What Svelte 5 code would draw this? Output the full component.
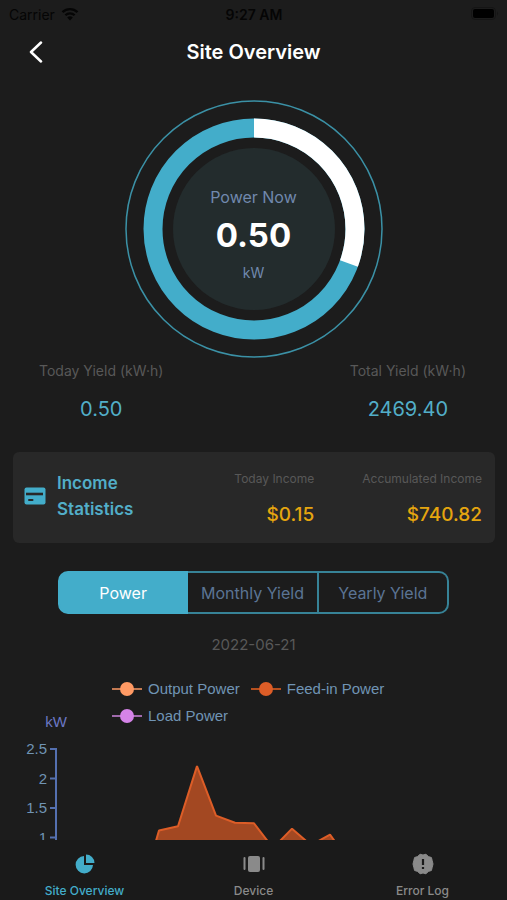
<script>
  let period = $state('Power');
  let tab = $state('Site Overview');

  const periods = ['Power', 'Monthly Yield', 'Yearly Yield'];
  const tabs = ['Site Overview', 'Device', 'Error Log'];

  const legend = [
    { name: 'Output Power', color: '#ff9a64', line: '#c47a52' },
    { name: 'Feed-in Power', color: '#dd5d27', line: '#b5501f' },
    { name: 'Load Power', color: '#d583e8', line: '#a06aac' },
  ];

  // one sample per slot on the category axis, in kW
  const feedIn = [0, 0, 0, 0, 0, 1.12, 1.19, 2.21, 1.37, 1.25, 1.24, 0.82, 1.15, 0.87, 1.05, 0.6, 0, 0, 0, 0, 0, 0];
  const ticks = [2.5, 2, 1.5, 1];

  const axisX = 56;
  const top = 37;
  const unit = 59;
  const step = 19;

  const yFor = (v) => top + (2.5 - v) * unit;
  const xFor = (i) => axisX + 8 + i * step;

  const line = feedIn.map((v, i) => `${xFor(i)},${yFor(v)}`).join(' ');
  const area = `${xFor(0)},${yFor(0)} ${line} ${xFor(feedIn.length - 1)},${yFor(0)}`;

  const ringLength = 2 * Math.PI * 101;
  const share = 0.305;
</script>

<div class="app">
  <div class="status">
    <span class="carrier">
      Carrier
      <svg width="18" height="14" viewBox="0 0 18 14" aria-hidden="true">
        <path d="M1.5 5.2a10.6 10.6 0 0 1 15 0" fill="none" stroke="currentColor" stroke-width="2.4" />
        <path d="M4.4 8.2a6.5 6.5 0 0 1 9.2 0" fill="none" stroke="currentColor" stroke-width="2.3" />
        <path d="M9 13.4 6.2 10.6a4 4 0 0 1 5.6 0z" fill="currentColor" />
      </svg>
    </span>
    <span class="time">9:27 AM</span>
    <svg class="battery" width="28" height="14" viewBox="0 0 28 14" aria-hidden="true">
      <rect x="0.5" y="0.5" width="24" height="12" rx="3.5" fill="none" stroke="#151515" />
      <rect x="2" y="2" width="21" height="9" rx="2" fill="#000" />
      <path d="M26 4.5c1.4.6 1.4 3.4 0 4z" fill="#151515" />
    </svg>
  </div>

  <header>
    <button class="back" aria-label="Back">
      <svg width="14" height="22" viewBox="0 0 14 22">
        <path d="M12 1.5 2 11l10 9.5" fill="none" stroke="#fff" stroke-width="2.5" stroke-linecap="round" stroke-linejoin="round" />
      </svg>
    </button>
    <h1>Site Overview</h1>
  </header>

  <main>
    <section class="gauge">
      <svg width="258" height="258" viewBox="-129 -129 258 258" aria-hidden="true">
        <circle r="128" fill="none" stroke="#3b91a6" stroke-width="1.5" />
        <circle r="101" fill="none" stroke="#43adca" stroke-width="19" />
        <circle r="101" fill="none" stroke="#fff" stroke-width="19" stroke-dasharray="{ringLength * share} {ringLength}" transform="rotate(-90)" />
        <circle r="81" fill="#232c2d" />
      </svg>
      <div class="reading">
        <span class="reading-label">Power Now</span>
        <strong>0.50</strong>
        <span class="reading-unit">kW</span>
      </div>
    </section>

    <section class="yields">
      <div class="yield">
        <span>Today Yield (kW·h)</span>
        <b>0.50</b>
      </div>
      <div class="yield">
        <span>Total Yield (kW·h)</span>
        <b>2469.40</b>
      </div>
    </section>

    <section class="income">
      <div class="income-title">
        <svg width="22" height="18" viewBox="0 0 22 18" aria-hidden="true">
          <rect x="0.5" y="0.5" width="21" height="17" rx="2" fill="#43adca" />
          <path d="M2 7h17" stroke="#282828" stroke-width="2.6" />
          <path d="M5 13h3.5" stroke="#282828" stroke-width="2" stroke-linecap="round" />
        </svg>
        <h2>Income Statistics</h2>
      </div>
      <div class="amount">
        <span>Today Income</span>
        <b>$0.15</b>
      </div>
      <div class="amount">
        <span>Accumulated Income</span>
        <b>$740.82</b>
      </div>
    </section>

    <div class="periods">
      {#each periods as p}
        <button class:active={period === p} aria-pressed={period === p} onclick={() => (period = p)}>{p}</button>
      {/each}
    </div>

    <time class="date" datetime="2022-06-21">2022-06-21</time>

    <section class="chart">
      <ul class="legend">
        {#each legend as item}
          <li>
            <svg width="30" height="16" viewBox="0 0 30 16" aria-hidden="true">
              <path d="M0 8h30" stroke={item.line} stroke-width="2" />
              <circle cx="15" cy="8" r="7" fill={item.color} />
            </svg>
            {item.name}
          </li>
        {/each}
      </ul>
      <svg class="plot" viewBox="0 0 507 210" role="img" aria-label="Power in kW">
        <text class="axis-name" x={axisX} y="15" text-anchor="middle">kW</text>
        <polygon points={area} fill="#a34822" />
        <polyline points={line} fill="none" stroke="#dd5d27" stroke-width="2" stroke-linejoin="bevel" />
        <path d="M{axisX} {top - 1}V{yFor(0)}" stroke="#5470b0" stroke-width="2" />
        {#each ticks as t}
          <path d="M{axisX - 6} {yFor(t)}h6" stroke="#5470b0" stroke-width="2" />
          <text class="tick" x={axisX - 9} y={yFor(t) + 5} text-anchor="end">{t}</text>
        {/each}
      </svg>
    </section>
  </main>

  <nav>
    {#each tabs as t, i}
      <button class:active={tab === t} onclick={() => (tab = t)}>
        <svg width="24" height="24" viewBox="0 0 24 24" fill="currentColor" aria-hidden="true">
          {#if i === 0}
            <path d="M11 4v9h9a8.7 8.7 0 1 1-9-9z" />
            <path d="M13 2.500a8.500 8.500 0 0 1 8.500 8.500H13z" />
          {:else if i === 1}
            <rect x="6" y="4" width="12" height="16" rx="2" />
            <rect x="1.5" y="5" width="2" height="13" rx="1" />
            <rect x="20.5" y="5" width="2" height="13" rx="1" />
          {:else}
            <path d="M9 2.200 12 3l3-.8 2.400 2.400 3 .9.800 3.100L22 12l-.8 3.400-.8 3.100-3 .9L15 21.800 12 21l-3 .8-2.400-2.400-3-.9-.8-3.100L2 12l.8-3.400.8-3.100 3-.9z" stroke="currentColor" stroke-linejoin="round" />
            <path d="M12 7v6M12 15v2" stroke="#1a1a1a" stroke-width="2.200" />
          {/if}
        </svg>
        {t}
      </button>
    {/each}
  </nav>
</div>

<style>
  :global(body) {
    margin: 0;
    background: #1c1c1c;
  }

  .app {
    display: flex;
    flex-direction: column;
    height: 100vh;
    overflow: hidden;
    background: #1c1c1c;
    color: #fff;
    font-family: Inter, "Liberation Sans", sans-serif;
  }

  button {
    padding: 0;
    border: 0;
    background: none;
    color: inherit;
    font: inherit;
    cursor: pointer;
  }

  .status {
    display: grid;
    grid-template-columns: 1fr auto 1fr;
    align-items: center;
    height: 28px;
    padding: 0 8px 0 9px;
    color: #050505;
    font-size: 14px;
  }

  .carrier {
    display: flex;
    align-items: center;
    gap: 6px;
  }

  .time { font-weight: 600; }

  .battery { justify-self: end; }

  header {
    display: grid;
    grid-template-columns: 48px 1fr 48px;
    align-items: center;
    height: 48px;
    padding: 0 12px;
  }

  .back {
    display: grid;
    place-items: center;
    height: 44px;
  }

  h1 {
    margin: 0;
    font-size: 20px;
    font-weight: 600;
    text-align: center;
  }

  main {
    display: flex;
    flex: 1;
    flex-direction: column;
    min-height: 0;
    overflow-y: auto;
    scrollbar-width: none;
  }

  main > * { flex-shrink: 0; }

  .gauge {
    display: grid;
    place-items: center;
    padding-top: 24px;
  }

  .gauge > * { grid-area: 1 / 1; }

  .reading {
    display: flex;
    flex-direction: column;
    align-items: center;
    padding-top: 12px;
    color: #7189ad;
  }

  .reading-label {
    font-size: 16px;
    line-height: 20px;
  }

  .reading strong {
    color: #fff;
    font-size: 33px;
    font-weight: 700;
    line-height: 56px;
  }

  .reading-unit {
    font-size: 14px;
    line-height: 20px;
  }

  .yields {
    display: flex;
    justify-content: space-between;
    padding: 3px 41px 0 39px;
  }

  .yield {
    display: flex;
    flex-direction: column;
    gap: 14px;
    align-items: center;
    color: #585858;
    font-size: 14px;
    line-height: 20px;
  }

  .yield b {
    color: #52aec8;
    font-size: 20px;
    font-weight: 400;
    line-height: 28px;
  }

  .income {
    display: flex;
    gap: 48px;
    align-items: center;
    margin: 29px 12px 0 13px;
    padding: 19px 13px 14px 11px;
    border-radius: 6px;
    background: #282828;
  }

  .income-title {
    display: flex;
    flex: 1;
    gap: 11px;
    align-items: center;
    align-self: flex-start;
    margin-top: -1px;
  }

  h2 {
    width: 100px;
    margin: 0;
    color: #52aec8;
    font-size: 17px;
    font-weight: 600;
    line-height: 26px;
  }

  .amount {
    display: flex;
    flex-direction: column;
    gap: 14px;
    align-items: flex-end;
    color: #585858;
    font-size: 12px;
    line-height: 16px;
  }

  .amount b {
    color: #e5a50f;
    font-size: 19px;
    font-weight: 500;
    line-height: 28px;
  }

  .periods {
    display: grid;
    grid-template-columns: repeat(3, 1fr);
    margin: 28px 58px 0;
    color: #5b7494;
    font-size: 16px;
  }

  .periods button {
    height: 43px;
    border: 2px solid #378397;
  }

  .periods button + button { border-left-width: 0; }

  .periods button:first-child { border-radius: 10px 0 0 10px; }

  .periods button:last-child { border-radius: 0 10px 10px 0; }

  .periods .active {
    border-color: #43adca;
    background: #43adca;
    color: #fff;
  }

  .date {
    margin-top: 20px;
    color: #585858;
    font-size: 15px;
    line-height: 22px;
    text-align: center;
  }

  .chart {
    margin-top: 19px;
    font-family: "Liberation Sans", sans-serif;
  }

  .legend {
    display: flex;
    flex-wrap: wrap;
    gap: 0 11px;
    margin: 0 100px 0 112px;
    padding: 0;
    color: #7094b4;
    font-size: 15px;
    line-height: 27px;
    list-style: none;
  }

  .legend li {
    display: flex;
    gap: 6px;
    align-items: center;
  }

  .plot {
    display: block;
    width: 100%;
    margin-top: -17px;
  }

  .axis-name {
    fill: #6b77c4;
    font-size: 15px;
  }

  .tick {
    fill: #7094b4;
    font-size: 15px;
  }

  nav {
    display: grid;
    flex-shrink: 0;
    grid-template-columns: repeat(3, 1fr);
    height: 60px;
    background: #1a1a1a;
  }

  nav button {
    display: flex;
    flex-direction: column;
    gap: 7px;
    align-items: center;
    padding-top: 12px;
    color: #8a8a8a;
    font-size: 12px;
    font-weight: 500;
    line-height: 16px;
  }

  nav .active { color: #43adca; }
</style>
